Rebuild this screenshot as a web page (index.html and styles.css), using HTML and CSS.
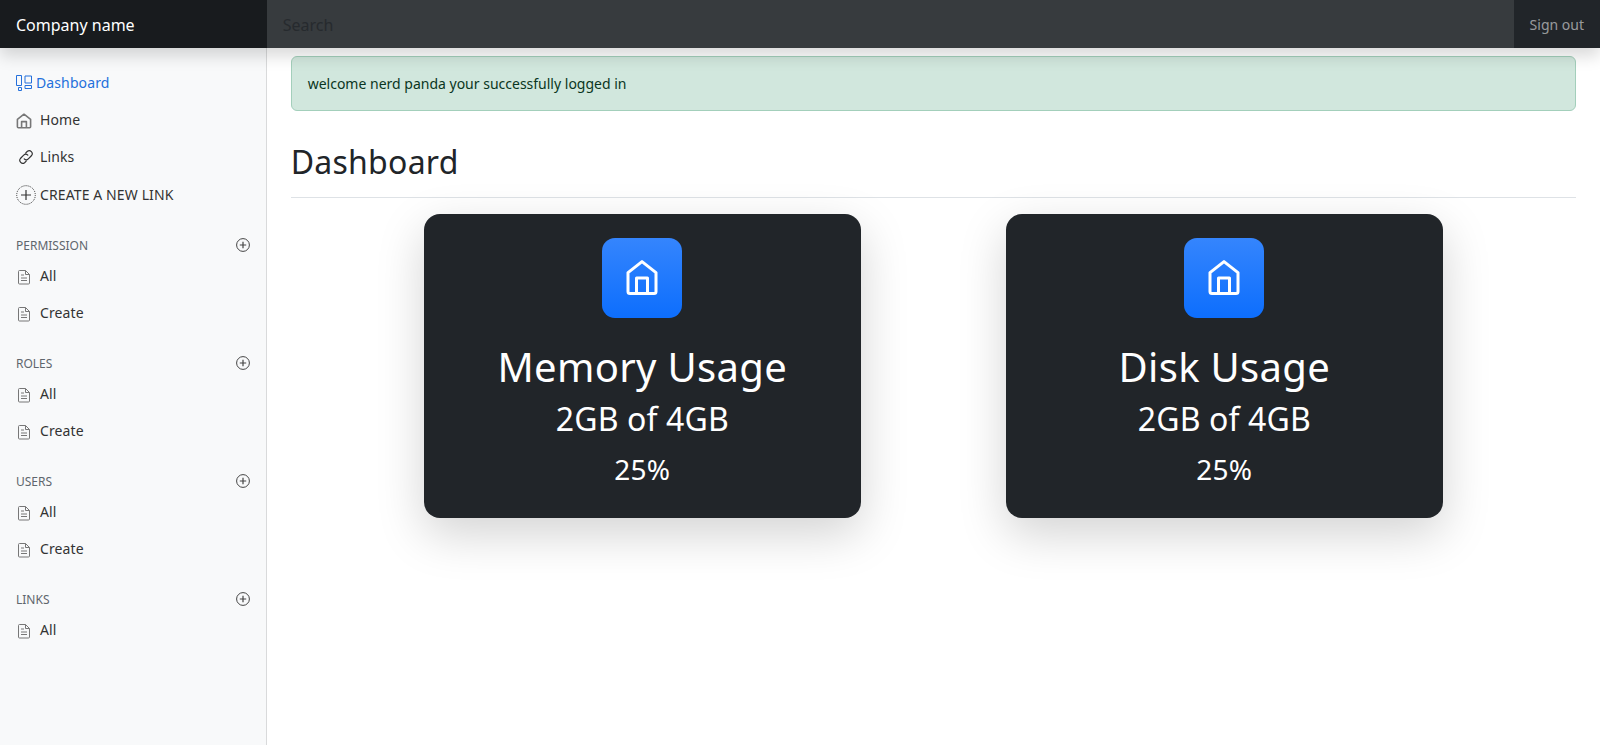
FILE: index.html
```html
<!DOCTYPE html>
<html lang="en">
<head>
    <meta charset="UTF-8">
    <title>Dashboard</title>
    <link rel="stylesheet" href="styles.css">
</head>
<body>
    <svg class="defs" width="0" height="0">
        <symbol id="i-home" viewBox="0 0 16 16">
            <path d="M8 1.2 L14.6 6.4 V13.8 Q14.6 14.8 13.6 14.8 H2.4 Q1.4 14.8 1.4 13.8 V6.4 Z M5.6 14.8 V8.6 H10.4 V14.8" fill="none" stroke="currentColor" stroke-width="1.6" stroke-linejoin="round"/>
        </symbol>
        <symbol id="i-file" viewBox="0 0 16 16">
            <path d="M2.5 2.5 Q2.5 1.5 3.5 1.5 H9.5 L13.5 5.5 V14 Q13.5 15 12.5 15 H3.5 Q2.5 15 2.5 14 Z M9.5 1.5 V5.5 H13.5 M5 6 H8 M5 9 H11 M5 11.5 H11" fill="none" stroke="currentColor" stroke-width="1"/>
        </symbol>
        <symbol id="i-plus" viewBox="0 0 14 14">
            <circle cx="7" cy="7" r="6.4" fill="none" stroke="currentColor" stroke-width="1"/>
            <path d="M7 3.8 V10.2 M3.8 7 H10.2" fill="none" stroke="currentColor" stroke-width="1.2"/>
        </symbol>
        <symbol id="i-house" viewBox="0 0 32 36">
            <path d="M16 1.6 L30 12.6 V31.6 Q30 33.6 28 33.6 H4 Q2 33.6 2 31.6 V12.6 Z M10.5 33.6 V18 H21.5 V33.6" fill="none" stroke="#fff" stroke-width="3" stroke-linejoin="round"/>
        </symbol>
    </svg>

    <header class="topbar">
        <a class="brand">Company name</a>
        <input class="search" type="text" placeholder="Search">
        <a class="signout">Sign out</a>
    </header>

    <div class="layout">
        <nav class="sidebar">
            <ul class="nav">
                <li><a class="nav-link active">
                    <svg class="icon" viewBox="0 0 16 16"><path d="M.5.5H5.5V10.5H.5Z M9 1H15.5V8H9Z M2.5 12.5H5.5V15.5H2.5Z M9 10.5H15.5V13.5H9Z" fill="none" stroke="currentColor" stroke-width="1"/></svg>
                    Dashboard</a></li>
                <li><a class="nav-link"><svg class="icon"><use href="#i-home"/></svg>Home</a></li>
                <li><a class="nav-link"><svg class="icon icon-link" viewBox="0 0 16 16"><path d="M6.2 9.8 A2.9 2.9 0 0 0 10.3 9.8 L13.6 6.5 A3 3 0 0 0 9.4 2.3 L7.8 3.9 M9.8 6.2 A2.9 2.9 0 0 0 5.7 6.2 L2.4 9.5 A3 3 0 0 0 6.6 13.7 L8.2 12.1" fill="none" stroke="currentColor" stroke-width="1.2" stroke-linecap="round"/></svg>Links</a></li>
                <li class="new-link"><a class="nav-link"><svg class="icon icon-new" viewBox="0 0 20 20"><circle cx="10" cy="10" r="9.3" fill="none" stroke="currentColor" stroke-width="1" stroke-dasharray="1 1"/><path d="M10 5 V15 M5 10 H15" fill="none" stroke="currentColor" stroke-width="1.2"/></svg>CREATE A NEW LINK</a></li>
            </ul>

            <h6 class="nav-heading"><span>Permission</span><svg class="icon-add"><use href="#i-plus"/></svg></h6>
            <ul class="nav">
                <li><a class="nav-link"><svg class="icon"><use href="#i-file"/></svg>All</a></li>
                <li><a class="nav-link"><svg class="icon"><use href="#i-file"/></svg>Create</a></li>
            </ul>

            <h6 class="nav-heading"><span>Roles</span><svg class="icon-add"><use href="#i-plus"/></svg></h6>
            <ul class="nav">
                <li><a class="nav-link"><svg class="icon"><use href="#i-file"/></svg>All</a></li>
                <li><a class="nav-link"><svg class="icon"><use href="#i-file"/></svg>Create</a></li>
            </ul>

            <h6 class="nav-heading"><span>Users</span><svg class="icon-add"><use href="#i-plus"/></svg></h6>
            <ul class="nav">
                <li><a class="nav-link"><svg class="icon"><use href="#i-file"/></svg>All</a></li>
                <li><a class="nav-link"><svg class="icon"><use href="#i-file"/></svg>Create</a></li>
            </ul>

            <h6 class="nav-heading"><span>Links</span><svg class="icon-add"><use href="#i-plus"/></svg></h6>
            <ul class="nav">
                <li><a class="nav-link"><svg class="icon"><use href="#i-file"/></svg>All</a></li>
            </ul>
        </nav>

        <main class="content">
            <div class="alert">welcome nerd panda your successfully logged in</div>
            <h1 class="page-title">Dashboard</h1>

            <div class="cards">
                <div class="card">
                    <div class="card-icon"><svg width="32" height="36"><use href="#i-house"/></svg></div>
                    <div class="card-title">Memory Usage</div>
                    <div class="card-sub">2GB of 4GB</div>
                    <div class="card-pct">25%</div>
                </div>
                <div class="card">
                    <div class="card-icon"><svg width="32" height="36"><use href="#i-house"/></svg></div>
                    <div class="card-title">Disk Usage</div>
                    <div class="card-sub">2GB of 4GB</div>
                    <div class="card-pct">25%</div>
                </div>
            </div>
        </main>
    </div>
</body>
</html>
```
FILE: styles.css
```css
* {
    box-sizing: border-box;
}
html, body {
    height: 100%;
}
body {
    margin: 0;
    font-family: "Noto Sans", sans-serif;
    font-size: 14px;
    line-height: 21px;
    color: #212529;
    background-color: #fff;
    overflow: hidden;
}
.defs {
    position: absolute;
}

.topbar {
    position: relative;
    z-index: 2;
    display: flex;
    height: 48px;
    background-color: #212529;
    box-shadow: 0 8px 16px rgba(0, 0, 0, .15);
}
.brand {
    width: 266.67px;
    padding: 1px 16px 0;
    font-size: 16px;
    line-height: 48px;
    color: #fff;
    background-color: rgba(0, 0, 0, .25);
}
.search {
    flex: 1;
    padding: 2px 16px 0;
    border: 0;
    outline: 0;
    font-family: inherit;
    font-size: 16px;
    color: #fff;
    background-color: rgba(255, 255, 255, .1);
}
.search::placeholder {
    color: #212529;
    opacity: .75;
}
.signout {
    padding: 1px 16px 0;
    line-height: 48px;
    color: rgba(255, 255, 255, .55);
}

.layout {
    display: flex;
    height: calc(100% - 48px);
}
.sidebar {
    width: 266.67px;
    flex-shrink: 0;
    padding-top: 16px;
    background-color: #f8f9fa;
    border-right: 1px solid #d9dadb;
}
.nav {
    margin: 0;
    padding: 0;
    list-style: none;
}
.new-link {
    padding-top: 1px;
}
.nav-link {
    display: flex;
    align-items: flex-start;
    height: 37px;
    padding: 8px 16px;
    letter-spacing: .008em;
    color: #333;
}
.nav-link.active {
    color: #2470dc;
}
.icon {
    width: 16px;
    height: 16px;
    flex-shrink: 0;
    margin: 4px 8px 0 0;
    color: #777;
}
.active .icon {
    color: #2470dc;
    margin: 3px 4px 0 0;
}
.icon-link {
    color: #333;
    margin: 3px 6px 0 2px;
}
.icon-new {
    width: 20px;
    height: 20px;
    margin: 1px 4px 0 0;
    color: #333;
}
.nav-heading {
    display: flex;
    justify-content: space-between;
    align-items: center;
    height: 18px;
    margin: 24px 0 2px;
    padding: 0 16px;
    font-size: 12px;
    font-weight: 400;
    line-height: 18px;
    text-transform: uppercase;
    color: #5f666d;
}
.icon-add {
    width: 14px;
    height: 14px;
    margin-top: -2px;
    color: #444;
}

.content {
    flex: 1;
    min-width: 0;
    padding: 8px 24px 0;
}
.alert {
    padding: 16px;
    color: #0a3622;
    background-color: #d1e7dd;
    border: 1px solid #a3cfbb;
    border-radius: 6px;
}
.page-title {
    margin: 32px 0 16px;
    padding-bottom: 16px;
    font-size: 32px;
    font-weight: 400;
    line-height: 38.4px;
    letter-spacing: .008em;
    border-bottom: 1px solid #dee2e6;
}
.cards {
    display: flex;
    justify-content: center;
    gap: 145px;
}
.card {
    width: 437px;
    height: 304px;
    padding-top: 24px;
    text-align: center;
    color: #fff;
    background-color: #212529;
    border-radius: 16px;
    box-shadow: 0 16px 48px rgba(0, 0, 0, .175);
}
.card-icon {
    display: flex;
    align-items: center;
    justify-content: center;
    width: 80px;
    height: 80px;
    margin: 0 auto 25px;
    background: linear-gradient(#3585fd, #0d6efd);
    border-radius: 13px;
}
.card-title {
    font-size: 40px;
    line-height: 48px;
    letter-spacing: .008em;
    margin-bottom: 9px;
}
.card-sub {
    font-size: 32px;
    line-height: 38.4px;
    letter-spacing: .004em;
    margin-bottom: 14px;
}
.card-pct {
    font-size: 28px;
    line-height: 33.6px;
    letter-spacing: .008em;
}
```
